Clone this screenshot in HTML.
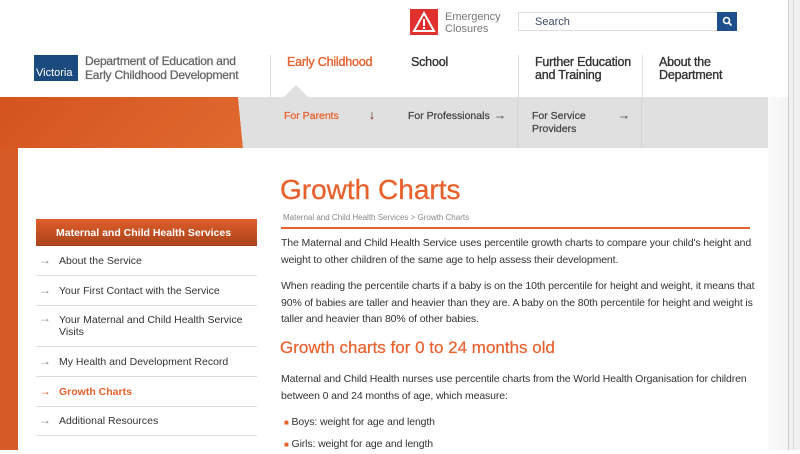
<!DOCTYPE html>
<html><head><meta charset="utf-8"><style>
*{margin:0;padding:0;box-sizing:border-box}
body{width:800px;height:450px;overflow:hidden;background:#fff;font-family:"Liberation Sans",sans-serif;position:relative}
.a{position:absolute}
.nav{font-size:12.5px;color:#333;line-height:13px;-webkit-text-stroke:0.35px #333;letter-spacing:-0.2px}
.sub{font-size:10.5px;color:#444;line-height:13px;-webkit-text-stroke:0.25px #444}
.p{font-size:10.5px;color:#333;line-height:16.5px;letter-spacing:-0.12px}
.side{position:absolute;left:36px;width:221px;border-bottom:1px solid #ddd;font-size:10.5px;color:#333;padding-left:23px}
.side span{position:absolute;left:3px;color:#888;font-size:12px}
</style></head><body>
<div class="a" style="left:768px;top:97px;width:32px;height:353px;background:linear-gradient(90deg,#fafafa,#f0f0f0)"></div>
<div class="a" style="left:788px;top:0;width:12px;height:450px;background:#f0f0f0;border-left:1px solid #ccc"></div>
<div class="a" style="left:793px;top:0;width:1px;height:450px;background:#d8d8d8"></div>
<div class="a" style="left:0;top:97px;width:245px;height:51px;background:linear-gradient(135deg,#d4531f,#e06a30);clip-path:polygon(0 0,238px 0,243px 51px,0 51px)"></div>
<div class="a" style="left:0;top:148px;width:18px;height:302px;background:#d55a26"></div>
<div class="a" style="left:238px;top:97px;width:530px;height:51px;background:#e0e0e0;clip-path:polygon(0 0,530px 0,530px 51px,5px 51px)"></div>
<div class="a" style="left:517px;top:97px;width:1px;height:51px;background:#d4d4d4"></div>
<div class="a" style="left:641px;top:97px;width:1px;height:51px;background:#d4d4d4"></div>
<div class="a" style="left:284px;top:85px;width:24px;height:12px;background:#e0e0e0;clip-path:polygon(50% 0,100% 100%,0 100%)"></div>
<div class="a" style="left:34px;top:55px;width:44px;height:26px;background:#1b4a7e"></div>
<div class="a" style="left:36px;top:67px;font-size:11px;color:#fff;line-height:12px">Victoria</div>
<div class="a" style="left:85px;top:54px;font-size:12px;color:#666;line-height:14px;-webkit-text-stroke:0.3px #666;letter-spacing:-0.2px">Department of Education and<br>Early Childhood Development</div>
<div class="a" style="left:410px;top:9px;width:28px;height:26px;background:#e0312f"></div>
<svg class="a" style="left:412px;top:11px" width="24" height="22"><path d="M12 2 L22 20 L2 20 Z" fill="none" stroke="#fff" stroke-width="2"/><rect x="11" y="8" width="2" height="7" fill="#fff"/><rect x="11" y="16" width="2" height="2" fill="#fff"/></svg>
<div class="a" style="left:445px;top:12px;font-size:11px;color:#777;line-height:11.5px">Emergency<br>Closures</div>
<div class="a" style="left:518px;top:12px;width:200px;height:19px;border:1px solid #ddd;font-size:11px;color:#3a4a66;padding:3px 16px">Search</div>
<div class="a" style="left:717px;top:12px;width:20px;height:19px;background:#1e4f8a"></div>
<svg class="a" style="left:721px;top:15px" width="12" height="12"><circle cx="5.5" cy="5.5" r="3" fill="none" stroke="#fff" stroke-width="1.6"/><path d="M8 8 L10.5 10.5" stroke="#fff" stroke-width="1.8"/></svg>
<div class="a" style="left:270px;top:55px;width:1px;height:42px;background:#ddd"></div>
<div class="a" style="left:518px;top:55px;width:1px;height:42px;background:#ddd"></div>
<div class="a" style="left:642px;top:55px;width:1px;height:42px;background:#ddd"></div>
<div class="a nav" style="left:287px;top:56px;color:#e8602c;-webkit-text-stroke:0.35px #e8602c">Early Childhood</div>
<div class="a nav" style="left:411px;top:56px">School</div>
<div class="a nav" style="left:535px;top:56px">Further Education<br>and Training</div>
<div class="a nav" style="left:659px;top:56px">About the<br>Department</div>
<div class="a sub" style="left:284px;top:110px;color:#e8602c;-webkit-text-stroke:0.25px #e8602c">For Parents</div>
<div class="a sub" style="left:369px;top:109px;color:#e8602c;font-size:12px">↓</div>
<div class="a sub" style="left:408px;top:110px">For Professionals</div>
<div class="a sub" style="left:494px;top:109px;color:#888;font-size:12px">→</div>
<div class="a sub" style="left:532px;top:110px">For Service<br>Providers</div>
<div class="a sub" style="left:618px;top:109px;color:#888;font-size:12px">→</div>
<div class="a" style="left:36px;top:219px;width:221px;height:27px;background:linear-gradient(#e05e2a,#a8431c);color:#fff;font-size:10.5px;font-weight:bold;padding:8px 20px">Maternal and Child Health Services</div>
<div class="side" style="top:246px;height:30px;padding-top:9px"><span style="top:7px">→</span>About the Service</div>
<div class="side" style="top:276px;height:30px;padding-top:9px"><span style="top:7px">→</span>Your First Contact with the Service</div>
<div class="side" style="top:306px;height:41px;padding-top:8px;line-height:12px"><span style="top:6px">→</span>Your Maternal and Child Health Service<br>Visits</div>
<div class="side" style="top:347px;height:30px;padding-top:9px"><span style="top:7px">→</span>My Health and Development Record</div>
<div class="side" style="top:377px;height:30px;padding-top:9px;color:#e8602c;font-weight:bold"><span style="top:7px;color:#e8602c">→</span>Growth Charts</div>
<div class="side" style="top:407px;height:29px;padding-top:8px"><span style="top:6px">→</span>Additional Resources</div>
<div class="a" style="left:280px;top:174px;font-size:28px;color:#e8602c;line-height:32px;-webkit-text-stroke:0.3px #e8602c">Growth Charts</div>
<div class="a" style="left:283px;top:213px;font-size:8px;color:#888">Maternal and Child Health Services &gt; Growth Charts</div>
<div class="a" style="left:281px;top:227px;width:469px;height:2px;background:#e8602c"></div>
<div class="a p" style="left:281px;top:235px;width:482px">The Maternal and Child Health Service uses percentile growth charts to compare your child's height and weight to other children of the same age to help assess their development.</div>
<div class="a p" style="left:281px;top:278px;width:482px">When reading the percentile charts if a baby is on the 10th percentile for height and weight, it means that 90% of babies are taller and heavier than they are. A baby on the 80th percentile for height and weight is taller and heavier than 80% of other babies.</div>
<div class="a" style="left:280px;top:337px;font-size:17px;color:#e8602c;line-height:22px;-webkit-text-stroke:0.2px #e8602c">Growth charts for 0 to 24 months old</div>
<div class="a p" style="left:281px;top:371px;width:482px">Maternal and Child Health nurses use percentile charts from the World Health Organisation for children between 0 and 24 months of age, which measure:</div>
<div class="a p" style="left:284px;top:414px"><span style="color:#e8602c;font-size:8px">■</span> Boys: weight for age and length</div>
<div class="a p" style="left:284px;top:436px"><span style="color:#e8602c;font-size:8px">■</span> Girls: weight for age and length</div>
</body></html>
